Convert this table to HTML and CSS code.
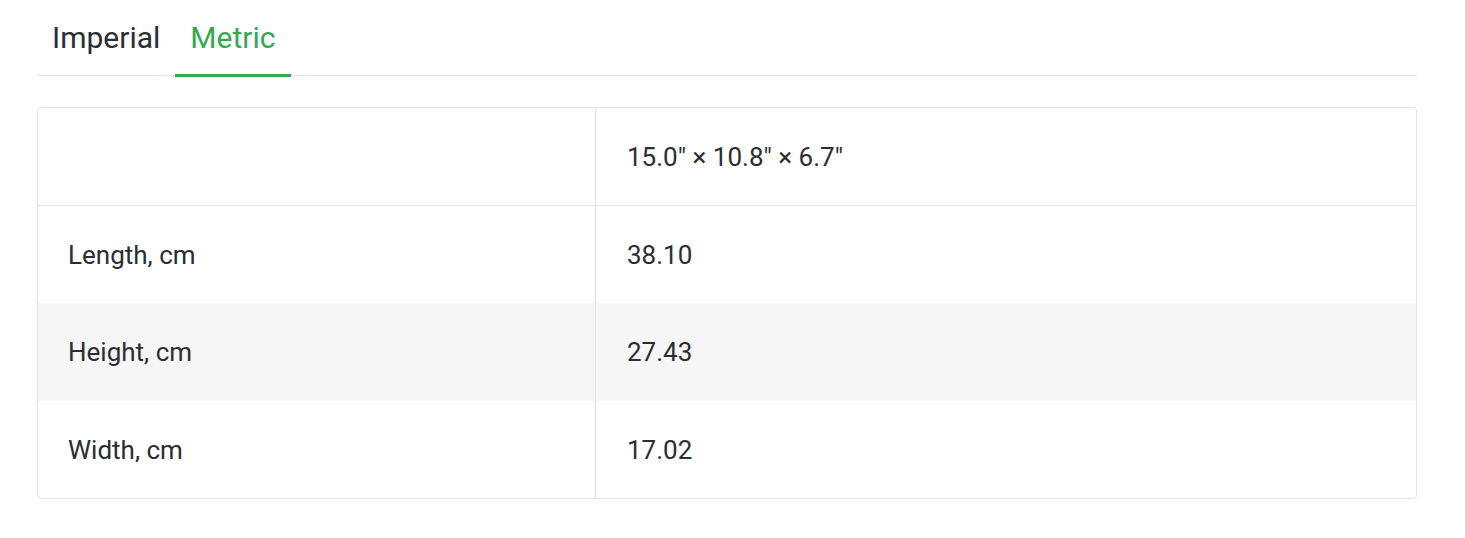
FILE: index.html
```html
<!DOCTYPE html>
<html>
<head>
<meta charset="utf-8">
<link rel="stylesheet" href="styles.css">
</head>
<body>
<div class="wrap">
  <div class="tabs">
    <div class="tab">Imperial</div>
    <div class="tab active">Metric</div>
  </div>
  <div class="table">
    <div class="row head">
      <div class="cell label"></div>
      <div class="cell value">15.0" × 10.8" × 6.7"</div>
    </div>
    <div class="row">
      <div class="cell label">Length, cm</div>
      <div class="cell value">38.10</div>
    </div>
    <div class="row shaded">
      <div class="cell label">Height, cm</div>
      <div class="cell value">27.43</div>
    </div>
    <div class="row">
      <div class="cell label">Width, cm</div>
      <div class="cell value">17.02</div>
    </div>
  </div>
</div>
</body>
</html>
```
FILE: styles.css
```css
html, body {
  margin: 0;
  padding: 0;
  background: #fff;
}
body {
  font-family: Roboto, "Liberation Sans", sans-serif;
  color: #2a2e33;
}
.wrap {
  margin: 0 48px 0 37px;
}
.tabs {
  display: flex;
  border-bottom: 1px solid #e3e3e3;
  height: 75px;
}
.tab {
  padding: 0 15px;
  font-size: 30px;
  line-height: 75px;
  height: 75px;
  box-sizing: border-box;
  color: #2a2e33;
}
.tab.active {
  padding: 0 16px 0 15px;
  color: #34a853;
  border-bottom: 3px solid #34a853;
  height: 77px;
}
.table {
  margin-top: 31px;
  border: 1px solid #e3e3e3;
  border-radius: 4px;
  overflow: hidden;
}
.row {
  display: flex;
  height: 97px;
}
.row.head {
  height: 97px;
  border-bottom: 1px solid #e3e3e3;
}
.row.shaded {
  background: #f6f6f6;
  height: 98px;
}
.cell {
  display: flex;
  align-items: center;
  font-size: 26px;
  box-sizing: border-box;
}
.label {
  width: 558px;
  padding-left: 30px;
  border-right: 1px solid #e3e3e3;
}
.value {
  flex: 1;
  padding-left: 31px;
}
```
